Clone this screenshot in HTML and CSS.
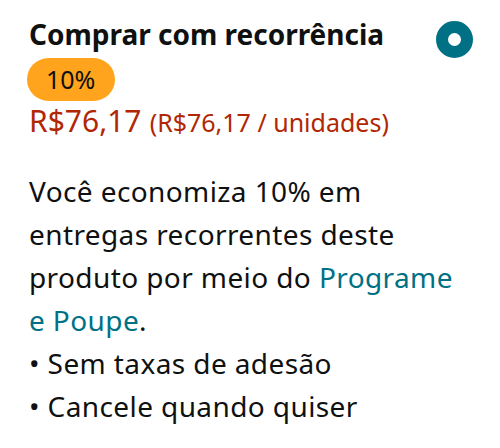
FILE: index.html
```html
<!DOCTYPE html>
<html lang="pt-BR">
<head>
<meta charset="utf-8">
<link rel="stylesheet" href="styles.css">
</head>
<body>
<div class="card">
  <div class="head">
    <div class="head-text">
      <div class="title">Comprar com recorrência</div>
      <span class="badge">10%</span>
      <div class="price"><span class="amount">R$76,17</span> <span class="unit">(R$76,17 / unidades)</span></div>
    </div>
    <span class="radio"></span>
  </div>
  <p class="desc">Você economiza 10% em entregas recorrentes deste produto por meio do <a class="link" href="#">Programe e Poupe</a>.</p>
  <ul class="perks">
    <li>Sem taxas de adesão</li>
    <li>Cancele quando quiser</li>
  </ul>
</div>
</body>
</html>
```
FILE: styles.css
```css
* { box-sizing: border-box; }
html, body { margin: 0; padding: 0; background: #fff; }
body { font-family: "Noto Sans", "Open Sans", sans-serif; color: #0f1111; }
.card { width: 500px; height: 448px; padding: 14px 27px 0 29px; }
.head { display: flex; justify-content: space-between; align-items: flex-start; }
.head-text { display: flex; flex-direction: column; align-items: flex-start; }
.title { font-size: 28px; font-weight: 700; line-height: 40px; }
.badge { background: #ffa41c; color: #0f1111; font-size: 25px; line-height: 43px; height: 43px; padding: 0 20px 0 19px; border-radius: 22px; margin-left: -2px; margin-top: 4px; }
.price { color: #b12704; line-height: 40px; margin-top: 0; }
.amount { font-size: 30px; }
.unit { font-size: 25px; margin-left: 4px; }
.radio { width: 37px; height: 37px; border-radius: 50%; border: 12px solid #007185; margin-top: 7px; flex: none; }
.desc { margin: 24px 0 0; font-size: 28px; line-height: 43px; width: 430px; letter-spacing: 0.4px; }
.link { color: #007185; text-decoration: none; }
.perks { list-style: none; margin: 0; padding: 0; font-size: 28px; line-height: 43px; letter-spacing: 0.4px; }
.perks li::before { content: "• "; }
```
